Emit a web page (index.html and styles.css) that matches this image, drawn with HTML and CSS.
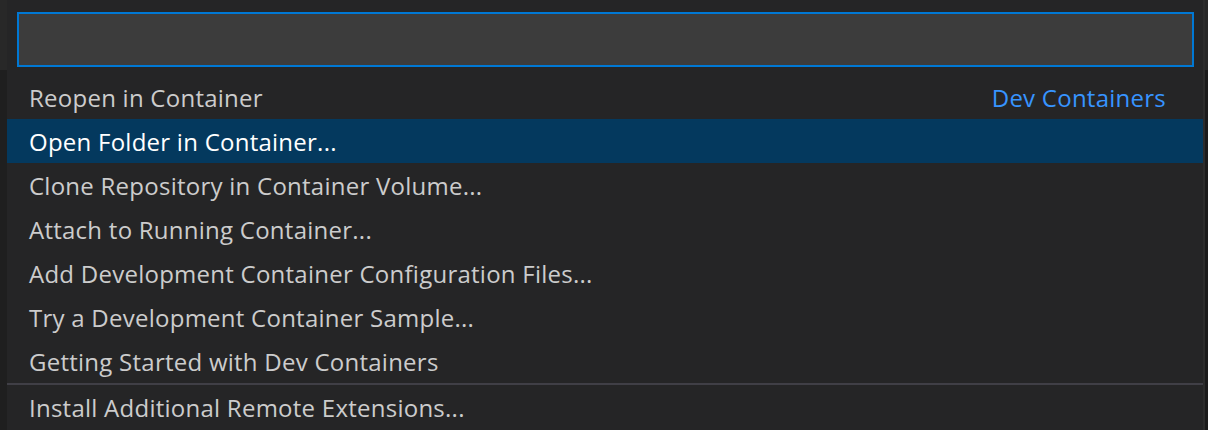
FILE: index.html
```html
<!DOCTYPE html>
<html>
<head>
<meta charset="utf-8">
<link rel="stylesheet" href="styles.css">
</head>
<body>
<div class="shell">
  <div class="edge-left"></div>
  <div class="panel">
    <div class="input-wrap">
      <div class="input"></div>
    </div>
    <ul class="list">
      <li class="row"><span class="label">Reopen in Container</span><span class="desc">Dev Containers</span></li>
      <li class="row selected"><span class="label">Open Folder in Container...</span></li>
      <li class="row"><span class="label">Clone Repository in Container Volume...</span></li>
      <li class="row"><span class="label">Attach to Running Container...</span></li>
      <li class="row"><span class="label">Add Development Container Configuration Files...</span></li>
      <li class="row"><span class="label">Try a Development Container Sample...</span></li>
      <li class="row"><span class="label">Getting Started with Dev Containers</span></li>
      <li class="row separated"><span class="label">Install Additional Remote Extensions...</span></li>
    </ul>
  </div>
  <div class="edge-right"></div>
</div>
</body>
</html>
```

FILE: styles.css
```css
html, body {
  margin: 0;
  padding: 0;
  background: #252526;
  overflow: hidden;
}

.shell {
  display: flex;
  width: 1208px;
  height: 430px;
  font-family: "Open Sans", "Noto Sans", sans-serif;
  font-size: 24px;
  letter-spacing: 0.25px;
}

.edge-left {
  width: 7px;
  flex: none;
  background: linear-gradient(to bottom, #282828 0, #282828 70px, #1f1f1f 70px);
}

.edge-right {
  width: 5px;
  flex: none;
  display: flex;
  background: linear-gradient(to bottom, #272727 0, #272727 70px, #1b1b1b 70px);
  box-shadow: inset 2px 0 0 #2c2c2c;
}

.panel {
  flex: 1;
  display: flex;
  flex-direction: column;
  background: #252526;
}

.input-wrap {
  padding: 12px 9px 8px 10px;
}

.input {
  height: 51px;
  background: #3c3c3c;
  border: 2px solid #0078d4;
}

.list {
  list-style: none;
  margin: 0;
  padding: 0;
}

.row {
  height: 44px;
  display: flex;
  align-items: center;
  justify-content: space-between;
  padding: 0 37px 0 22px;
  color: #cccccc;
  white-space: nowrap;
}

.row.selected {
  background: #04395e;
  color: #ffffff;
}

.row.separated {
  border-top: 2px solid #403f46;
}

.desc {
  color: #3794ff;
}
```
